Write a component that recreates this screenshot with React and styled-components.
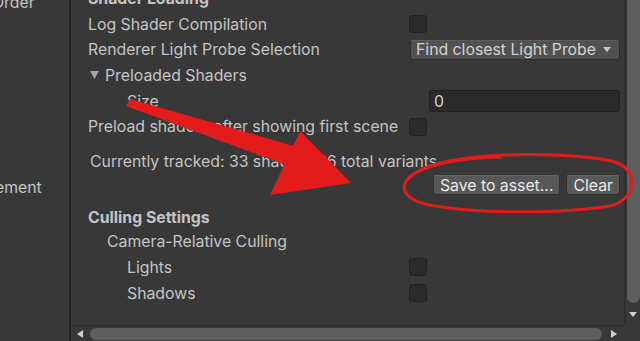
import React from 'react';
import styled, { createGlobalStyle } from 'styled-components';

const GlobalStyle = createGlobalStyle`
  html, body { margin: 0; padding: 0; background: #383838; }
  body {
    font-family: Inter, "Noto Sans", sans-serif;
    font-size: 15.8px;
    color: #c4c4c4;
  }
`;

const Window = styled.div`
  position: relative;
  width: 640px;
  height: 341px;
  overflow: hidden;
  display: flex;
  background: #383838;
`;

const Sidebar = styled.div`
  width: 69px;
  flex: none;
  overflow: hidden;
  border-right: 2px solid #232323;
`;

const SideList = styled.div`
  margin-top: -10px;
  margin-left: -134px;
  white-space: nowrap;
`;

const SideItem = styled.div`
  height: 26px;
  line-height: 26px;
  margin-top: ${(p) => p.$top || 0}px;
  padding-left: ${(p) => p.$indent || 0}px;
`;

const Panel = styled.div`
  flex: 1;
  min-width: 0;
  display: flex;
  flex-direction: column;
`;

const PanelBody = styled.div`
  flex: 1;
  min-height: 0;
  display: flex;
`;

const Content = styled.div`
  flex: 1;
  overflow: hidden;
  padding: 0 4px 0 17px;
  white-space: nowrap;
`;

const Header = styled.div`
  height: 25.7px;
  display: flex;
  align-items: center;
  font-weight: 700;
  margin-top: ${(p) => p.$top || 0}px;
  padding-top: ${(p) => p.$shift || 0}px;
  box-sizing: border-box;
`;

const Row = styled.div`
  height: 25.7px;
  display: grid;
  grid-template-columns: 321px 1fr;
  align-items: center;
`;

const Label = styled.div`
  display: flex;
  align-items: center;
  padding-left: ${(p) => p.$indent || 0}px;
`;

const Foldout = styled.svg`
  width: 9px;
  height: 8px;
  margin: 0 6px 0 2px;
  fill: #a5a5a5;
`;

const Checkbox = styled.div`
  width: 16px;
  height: 16px;
  box-sizing: content-box;
  background: #2b2b2b;
  border: 1px solid #222;
  border-radius: 3px;
`;

const Dropdown = styled.div`
  height: 20px;
  margin-left: 1px;
  box-sizing: border-box;
  display: flex;
  align-items: center;
  justify-content: space-between;
  padding: 0 8px 0 5px;
  background: #515151;
  border: 1px solid #2f2f2f;
  border-top-color: #5c5c5c;
  border-radius: 3px;
  color: #d2d2d2;
`;

const Caret = styled.span`
  width: 0;
  height: 0;
  border-left: 4px solid transparent;
  border-right: 4px solid transparent;
  border-top: 5px solid #c8c8c8;
`;

const TextField = styled.div`
  height: 22px;
  margin-left: ${(p) => p.$offset || 0}px;
  box-sizing: border-box;
  display: flex;
  align-items: center;
  padding-left: 4px;
  background: #2a2a2a;
  border: 1px solid #212121;
  border-radius: 3px;
  color: #d2d2d2;
`;

const Note = styled.div`
  height: 26px;
  margin-top: 8.5px;
  padding-left: 2px;
  display: flex;
  align-items: center;
`;

const ButtonRow = styled.div`
  margin-top: 1px;
  display: flex;
  justify-content: flex-end;
  gap: 6px;
`;

const Button = styled.div`
  height: 20px;
  box-sizing: border-box;
  display: flex;
  align-items: center;
  padding: 0 6px;
  background: #585858;
  border: 1px solid #303030;
  border-top-color: #646464;
  border-radius: 3px;
  color: #e8e8e8;
`;

const VScroll = styled.div`
  width: 14px;
  flex: none;
  border-left: 2px solid #2f2f2f;
  display: flex;
  flex-direction: column;
`;

const VThumb = styled.div`
  height: 303px;
  margin-left: 1px;
  background: #5e5e5e;
  border-radius: 0 0 7px 7px;
`;

const ArrowBox = styled.div`
  flex: 1;
  display: flex;
  align-items: center;
  justify-content: center;
`;

const Arrow = styled.span`
  width: 0;
  height: 0;
  border-style: solid;
  border-color: transparent;
  ${(p) =>
    p.$dir === 'down'
      ? 'border-width: 5px 4.5px 0 4.5px; border-top-color: #cfcfcf;'
      : p.$dir === 'left'
      ? 'border-width: 4.5px 6px 4.5px 0; border-right-color: #cfcfcf;'
      : 'border-width: 4.5px 0 4.5px 6px; border-left-color: #cfcfcf;'}
`;

const HRow = styled.div`
  height: 16px;
  flex: none;
  display: flex;
`;

const HScroll = styled.div`
  flex: 1;
  display: flex;
  align-items: center;
  padding: 0 7px 0 6px;
  gap: 7px;
  border-top: 1px solid #303030;
  box-sizing: border-box;
`;

const HThumb = styled.div`
  flex: 1;
  height: 12px;
  margin-right: 2px;
  background: #5e5e5e;
  border-radius: 6px;
`;

const Corner = styled.div`
  width: 16px;
  flex: none;
  background: #383838;
`;

const Overlay = styled.svg`
  position: absolute;
  left: 0;
  top: 0;
  width: 640px;
  height: 341px;
  pointer-events: none;
`;

export default function App() {
  return (
    <>
      <GlobalStyle />
      <Window>
        <Sidebar>
          <SideList>
            <SideItem>Script Execution Order</SideItem>
            <SideItem $top={159} $indent={2}>XR Plugin Management</SideItem>
          </SideList>
        </Sidebar>
        <Panel>
          <PanelBody>
            <Content>
              <Header $top={-14.5}>Shader Loading</Header>
              <Row>
                <Label>Log Shader Compilation</Label>
                <div><Checkbox /></div>
              </Row>
              <Row>
                <Label>Renderer Light Probe Selection</Label>
                <Dropdown>
                  Find closest Light Probe
                  <Caret />
                </Dropdown>
              </Row>
              <Row>
                <Label>
                  <Foldout viewBox="0 0 9 8">
                    <path d="M0 0 L9 0 L4.5 8 Z" />
                  </Foldout>
                  Preloaded Shaders
                </Label>
              </Row>
              <Row>
                <Label $indent={39}>Size</Label>
                <TextField $offset={20}>0</TextField>
              </Row>
              <Row>
                <Label>Preload shaders after showing first scene</Label>
                <div><Checkbox /></div>
              </Row>
              <Note>Currently tracked: 33 shaders 36 total variants</Note>
              <ButtonRow>
                <Button>Save to asset...</Button>
                <Button>Clear</Button>
              </ButtonRow>
              <Header $top={8} $shift={3}>Culling Settings</Header>
              <Row>
                <Label $indent={19}>Camera-Relative Culling</Label>
              </Row>
              <Row>
                <Label $indent={39}>Lights</Label>
                <div><Checkbox /></div>
              </Row>
              <Row>
                <Label $indent={39}>Shadows</Label>
                <div><Checkbox /></div>
              </Row>
            </Content>
            <VScroll>
              <VThumb />
              <ArrowBox>
                <Arrow $dir="down" />
              </ArrowBox>
            </VScroll>
          </PanelBody>
          <HRow>
            <HScroll>
              <Arrow $dir="left" />
              <HThumb />
              <Arrow $dir="right" />
            </HScroll>
            <Corner />
          </HRow>
        </Panel>
        <Overlay viewBox="0 0 640 341">
          <polygon fill="#e31b1b" points="130,99 315,152 305,172 126,106" />
          <polygon fill="#e31b1b" points="300,131 351,183 270,195" />
          <path
            d="M425 168 C 470 150, 580 152, 615 162 C 640 170, 636 200, 610 206 C 560 214, 470 214, 425 204 C 395 196, 398 176, 432 166 C 452 160, 480 157, 500 157"
            fill="none"
            stroke="#e31b1b"
            strokeWidth="3"
            strokeLinecap="round"
          />
        </Overlay>
      </Window>
    </>
  );
}
